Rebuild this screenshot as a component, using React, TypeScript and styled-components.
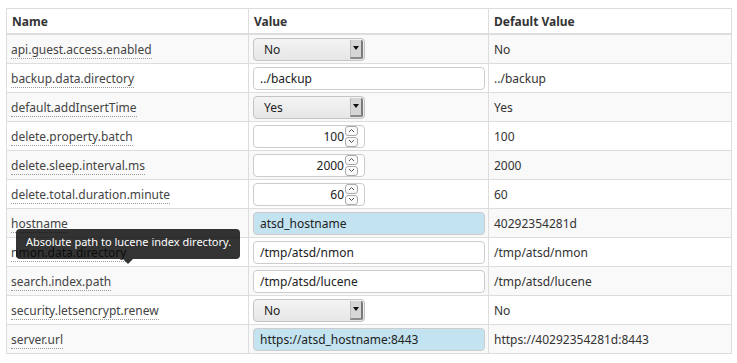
import styled, { createGlobalStyle } from "styled-components";

const GlobalStyle = createGlobalStyle`
    body {
        margin: 0;
        background: #ffffff;
        font-family: "Noto Sans", "DejaVu Sans", sans-serif;
        font-size: 12px;
        color: #333333;
    }
`;

const Page = styled.div`
    padding: 8px 6px;
`;

const Table = styled.table`
    width: 725px;
    border-collapse: collapse;
    table-layout: fixed;
    border: 1px solid #dddddd;
`;

const HeadCell = styled.th`
    height: 24px;
    padding: 0 5px;
    text-align: left;
    font-weight: 700;
    color: #333333;
    border: 1px solid #dddddd;
    border-bottom-width: 2px;
`;

const Row = styled.tr<{ $striped: boolean }>`
    background: ${(p) => (p.$striped ? "#f9f9f9" : "#ffffff")};
`;

const Cell = styled.td`
    position: relative;
    height: 28px;
    padding: 0 4px;
    border: 1px solid #dddddd;
    vertical-align: middle;
    white-space: nowrap;
`;

const NameLabel = styled.span`
    color: #444444;
    border-bottom: 1px dotted #999999;
`;

const DefaultText = styled.span`
    color: #333333;
    padding-left: 1px;
`;

const TextInput = styled.div<{ $highlight?: boolean }>`
    box-sizing: border-box;
    width: 232px;
    height: 23px;
    padding: 0 6px;
    display: flex;
    align-items: center;
    border: 1px solid #cccccc;
    border-radius: 4px;
    background: ${(p) => (p.$highlight ? "#c3e3f1" : "#ffffff")};
    color: #222222;
`;

const SelectBox = styled.div`
    box-sizing: border-box;
    width: 112px;
    height: 23px;
    display: flex;
    align-items: center;
    justify-content: space-between;
    padding-left: 10px;
    border: 1px solid #c4c4c4;
    border-radius: 4px;
    background: linear-gradient(#f4f4f4, #e6e6e6);
    color: #222222;
    overflow: hidden;
`;

const SelectArrow = styled.div`
    box-sizing: border-box;
    width: 13px;
    height: 19px;
    margin-right: 1px;
    display: flex;
    align-items: center;
    justify-content: center;
    background: #d6d6d6;
    border-left: 1px solid #bbbbbb;
    border-right: 2px solid #7a7a7a;
    border-bottom: 2px solid #8a8a8a;
    border-radius: 0 2px 2px 0;

    &::after {
        content: "";
        border-left: 3px solid transparent;
        border-right: 3px solid transparent;
        border-top: 4px solid #111111;
    }
`;

const NumberBox = styled.div`
    box-sizing: border-box;
    width: 112px;
    height: 23px;
    display: flex;
    align-items: center;
    justify-content: flex-end;
    padding-right: 6px;
    border: 1px solid #cccccc;
    border-radius: 4px;
    background: #ffffff;
    color: #222222;
`;

const Spinner = styled.div`
    display: flex;
    flex-direction: column;
    gap: 1px;
    margin-left: 1px;
`;

const SpinButton = styled.div`
    box-sizing: border-box;
    width: 13px;
    height: 10px;
    display: flex;
    align-items: center;
    justify-content: center;
    border: 1px solid #aaaaaa;
    border-radius: 3px;
    background: #fafafa;
`;

const Tooltip = styled.div`
    position: absolute;
    top: -9px;
    left: 9px;
    z-index: 2;
    box-sizing: border-box;
    width: 224px;
    height: 30px;
    padding: 0 0 6px 10px;
    display: flex;
    align-items: center;
    background: rgba(0, 0, 0, 0.8);
    color: #ffffff;
    font-size: 11px;
    border-radius: 4px;
    white-space: nowrap;

    &::after {
        content: "";
        position: absolute;
        bottom: -5px;
        left: 107px;
        border-left: 5px solid transparent;
        border-right: 5px solid transparent;
        border-top: 5px solid rgba(0, 0, 0, 0.8);
    }
`;

type Value =
    | { kind: "select"; text: string }
    | { kind: "text"; text: string; highlight?: boolean }
    | { kind: "number"; text: string };

type Setting = { name: string; value: Value; def: string; tip?: string };

const settings: Setting[] = [
    { name: "api.guest.access.enabled", value: { kind: "select", text: "No" }, def: "No" },
    { name: "backup.data.directory", value: { kind: "text", text: "../backup" }, def: "../backup" },
    { name: "default.addInsertTime", value: { kind: "select", text: "Yes" }, def: "Yes" },
    { name: "delete.property.batch", value: { kind: "number", text: "100" }, def: "100" },
    { name: "delete.sleep.interval.ms", value: { kind: "number", text: "2000" }, def: "2000" },
    { name: "delete.total.duration.minute", value: { kind: "number", text: "60" }, def: "60" },
    { name: "hostname", value: { kind: "text", text: "atsd_hostname", highlight: true }, def: "40292354281d" },
    {
        name: "nmon.data.directory",
        value: { kind: "text", text: "/tmp/atsd/nmon" },
        def: "/tmp/atsd/nmon",
        tip: "Absolute path to lucene index directory.",
    },
    { name: "search.index.path", value: { kind: "text", text: "/tmp/atsd/lucene" }, def: "/tmp/atsd/lucene" },
    { name: "security.letsencrypt.renew", value: { kind: "select", text: "No" }, def: "No" },
    {
        name: "server.url",
        value: { kind: "text", text: "https://atsd_hostname:8443", highlight: true },
        def: "https://40292354281d:8443",
    },
];

function Chevron({ up }: { up?: boolean }) {
    return (
        <svg width="7" height="5" viewBox="0 0 7 5">
            <path
                d={up ? "M1 4 L3.5 1.5 L6 4" : "M1 1 L3.5 3.5 L6 1"}
                fill="none"
                stroke="#555"
                strokeWidth="1"
            />
        </svg>
    );
}

function ValueField({ value }: { value: Value }) {
    if (value.kind === "select") {
        return (
            <SelectBox>
                {value.text}
                <SelectArrow />
            </SelectBox>
        );
    }
    if (value.kind === "number") {
        return (
            <NumberBox>
                {value.text}
                <Spinner>
                    <SpinButton>
                        <Chevron up />
                    </SpinButton>
                    <SpinButton>
                        <Chevron />
                    </SpinButton>
                </Spinner>
            </NumberBox>
        );
    }
    return <TextInput $highlight={value.highlight}>{value.text}</TextInput>;
}

export default function App() {
    return (
        <Page>
            <GlobalStyle />
            <Table>
                <colgroup>
                    <col style={{ width: 242 }} />
                    <col style={{ width: 240 }} />
                    <col style={{ width: 243 }} />
                </colgroup>
                <thead>
                    <tr>
                        <HeadCell>Name</HeadCell>
                        <HeadCell>Value</HeadCell>
                        <HeadCell>Default Value</HeadCell>
                    </tr>
                </thead>
                <tbody>
                    {settings.map((s, index) => (
                        <Row key={s.name} $striped={index % 2 === 0}>
                            <Cell>
                                <NameLabel>{s.name}</NameLabel>
                                {s.tip && <Tooltip>{s.tip}</Tooltip>}
                            </Cell>
                            <Cell>
                                <ValueField value={s.value} />
                            </Cell>
                            <Cell>
                                <DefaultText>{s.def}</DefaultText>
                            </Cell>
                        </Row>
                    ))}
                </tbody>
            </Table>
        </Page>
    );
}
